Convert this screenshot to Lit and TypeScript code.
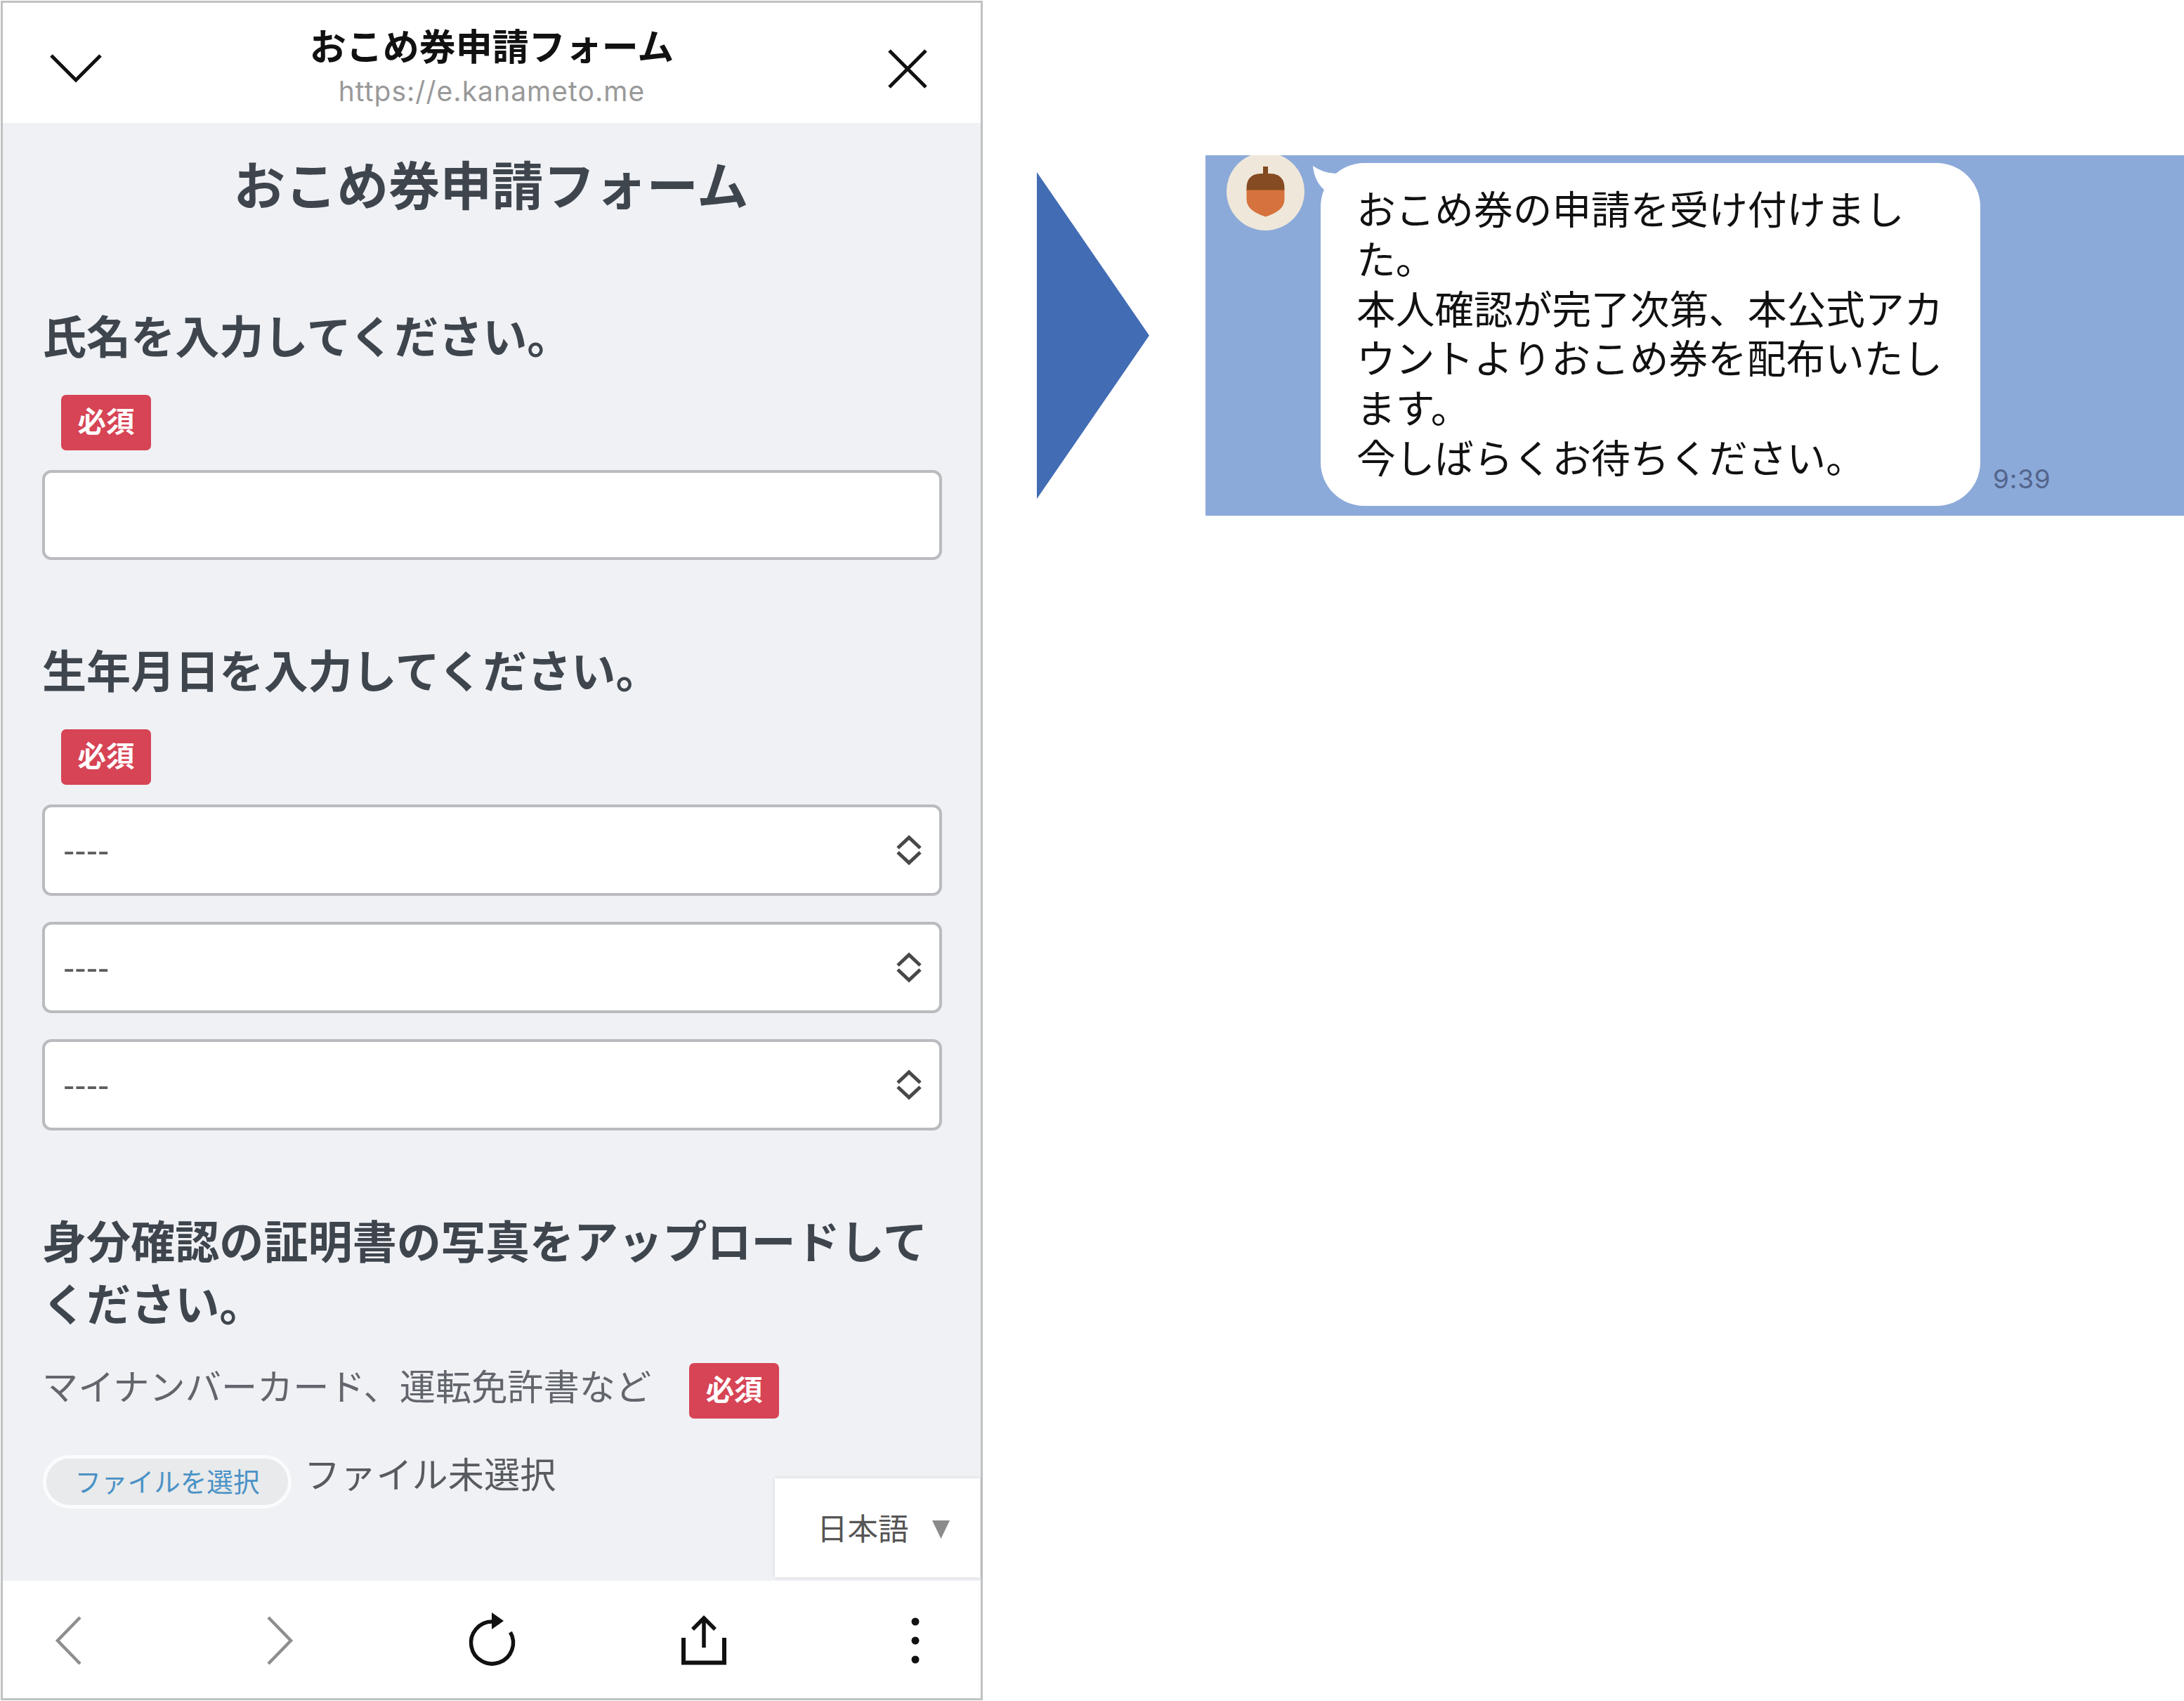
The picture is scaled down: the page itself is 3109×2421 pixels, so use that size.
import {html, svg, css, LitElement} from 'lit';
import {customElement, property} from 'lit/decorators.js';
import {map} from 'lit/directives/map.js';

const MESSAGE_LINES = [
  'おこめ券の申請を受け付けまし',
  'た。',
  '本人確認が完了次第、本公式アカ',
  'ウントよりおこめ券を配布いたし',
  'ます。',
  '今しばらくお待ちください。',
];

const TOOLBAR_ICONS = [
  svg`<path class="muted" d="M56 9 L24 42 L56 75"/>`,
  svg`<path class="muted" d="M23 9 L55 42 L23 75"/>`,
  svg`
    <path d="M39.500 15 A30 30 0 1 0 65.500 30"/>
    <path class="solid" d="M39 2 L56 14 L39 26 Z"/>
  `,
  svg`
    <path class="thick" d="M11 38 V73.500 H69 V38"/>
    <path d="M40 52 V11 M24 26 L40 10 L56 26"/>
  `,
  svg`
    <circle class="solid" cx="40" cy="15" r="5.5"/>
    <circle class="solid" cx="40" cy="42" r="5.5"/>
    <circle class="solid" cx="40" cy="69" r="5.5"/>
  `,
];

@customElement('select-box')
export class SelectBox extends LitElement {
  static styles = css`
  :host {
    display: block;
  }

  .box {
    align-items: center;
    background: #fff;
    border: 4px solid #b9bbbf;
    border-radius: 13px;
    box-sizing: border-box;
    color: #5c5c5c;
    display: flex;
    font: 49px/60px "Liberation Sans", sans-serif;
    height: 130px;
    justify-content: space-between;
    padding: 0 23px 0 26px;
  }

  .arrows {
    fill: none;
    height: 44px;
    stroke: #484848;
    stroke-width: 5;
    width: 40px;
  }
  `;

  @property({type: String})
  value = '----';

  render() {
    return html`
    <div class="box">
      <span>${this.value}</span>
      <svg class="arrows" viewBox="0 0 40 44">
        <path d="M4 19 L20 4 L36 19 M4 25 L20 40 L36 25"/>
      </svg>
    </div>
    `;
  }
}

@customElement('request-form')
export class RequestForm extends LitElement {
  static styles = css`
  :host {
    background: #eff1f5;
    box-sizing: border-box;
    color: #3f454d;
    display: block;
    height: 2075px;
    padding: 40px 55px 0 56px;
    position: relative;
  }

  .title {
    font-size: 73.5px;
    font-weight: 700;
    line-height: 90px;
    margin: 0 3px 126px 0;
    text-align: center;
  }

  .label {
    font-size: 63.1px;
    font-weight: 700;
    line-height: 89px;
    margin: 0;
    white-space: nowrap;
  }

  .badge {
    background: #d64455;
    border-radius: 7px;
    box-sizing: border-box;
    color: #fff;
    font-size: 40.5px;
    font-weight: 700;
    height: 79px;
    line-height: 72px;
    text-align: center;
    width: 128px;
  }

  .field .badge {
    margin: 42px 0 28px 27px;
  }

  .field {
    margin-bottom: 110px;
  }

  .text-input {
    background: #fff;
    border: 4px solid #b9bbbf;
    border-radius: 13px;
    box-sizing: border-box;
    height: 128px;
  }

  .selects {
    display: grid;
    gap: 37px;
  }

  .hint {
    color: #62666c;
    display: flex;
    font-size: 51.2px;
    gap: 54px;
    line-height: 62px;
    margin-top: 43px;
  }

  .file {
    color: #575b60;
    display: flex;
    font-size: 51.2px;
    gap: 18px;
    line-height: 51px;
    margin-top: 52px;
  }

  .file-button {
    background: #e8eaeb;
    border: 5px solid #fafbfc;
    border-radius: 40px;
    box-sizing: border-box;
    color: #4a92c6;
    font-size: 37.6px;
    height: 76px;
    line-height: 61px;
    margin-left: 1px;
    text-align: center;
    width: 354px;
  }

  .language {
    align-items: center;
    background: #fff;
    bottom: 5px;
    box-shadow: 0 0 5px rgba(0, 0, 0, 0.12);
    box-sizing: border-box;
    color: #555;
    display: flex;
    font-size: 43.5px;
    gap: 33px;
    height: 141px;
    padding: 0 0 3px 60px;
    position: absolute;
    right: 1px;
    width: 292px;
  }

  .language svg {
    fill: #8b8b8b;
    height: 26px;
    margin-top: 8px;
    width: 25px;
  }
  `;

  render() {
    return html`
    <h1 class="title">おこめ券申請フォーム</h1>
    <div class="field">
      <h2 class="label">氏名を入力してください。</h2>
      <div class="badge">必須</div>
      <div class="text-input"></div>
    </div>
    <div class="field">
      <h2 class="label">生年月日を入力してください。</h2>
      <div class="badge">必須</div>
      <div class="selects">
        <select-box></select-box>
        <select-box></select-box>
        <select-box></select-box>
      </div>
    </div>
    <h2 class="label">身分確認の証明書の写真をアップロードして<br>ください。</h2>
    <div class="hint">
      <span>マイナンバーカード、運転免許書など</span>
      <div class="badge">必須</div>
    </div>
    <div class="file">
      <div class="file-button">ファイルを選択</div>
      <span>ファイル未選択</span>
    </div>
    <div class="language">
      <span>日本語</span>
      <svg viewBox="0 0 25 26"><path d="M0 0 H25 L12.5 26 Z"/></svg>
    </div>
    `;
  }
}

@customElement('chat-panel')
export class ChatPanel extends LitElement {
  static styles = css`
  :host {
    align-items: flex-start;
    background: #8caad9;
    box-sizing: border-box;
    display: flex;
    height: 513px;
    overflow: hidden;
    padding-left: 30px;
  }

  .avatar {
    flex: none;
    height: 111px;
    margin-top: -4px;
    width: 111px;
  }

  .bubble {
    background: #fff;
    border-radius: 62px;
    box-sizing: border-box;
    color: #111;
    flex: none;
    font-size: 55.7px;
    height: 488px;
    line-height: 70.8px;
    margin: 11px 0 0 23px;
    padding: 28px 0 0 51px;
    position: relative;
    white-space: nowrap;
    width: 939px;
  }

  .tail {
    fill: #fff;
    height: 50px;
    left: -11px;
    position: absolute;
    top: 4px;
    width: 50px;
  }

  .time {
    align-self: flex-end;
    color: #53658c;
    font: 37px/40px Inter, sans-serif;
    letter-spacing: 0.8px;
    margin: 0 0 32px 18px;
  }
  `;

  render() {
    return html`
    <svg class="avatar" viewBox="0 0 111 111">
      <circle cx="55.5" cy="55.5" r="55.5" fill="#efe8da"/>
      <path d="M52 20 H59 V32 H52 Z" fill="#80491f"/>
      <path d="M28.500 54 V51 Q28.500 30 50 30 H61 Q82.500 30 82.500 51 V54 Z" fill="#854b22"/>
      <path d="M28.500 53.500 H82.500 V66 C82.500 80 71 86 55.500 91.500 C40 86 28.500 80 28.500 66 Z" fill="#d6723e"/>
    </svg>
    <div class="bubble">
      <svg class="tail" viewBox="0 0 50 50">
        <path d="M0 0 Q13 10 33 11 L46 12 L24 48 L16 34 Q2 22 0 0 Z"/>
      </svg>
      ${map(MESSAGE_LINES, (line: string) => html`<div>${line}</div>`)}
    </div>
    <span class="time">9:39</span>
    `;
  }
}

@customElement('app-root')
export class AppRoot extends LitElement {
  static styles = css`
  :host {
    align-items: flex-start;
    background: #fff;
    box-sizing: border-box;
    display: flex;
    font-family: "Noto Sans CJK JP", sans-serif;
    height: 2421px;
    overflow: hidden;
    padding: 1px 0 0 1px;
    width: 3109px;
  }

  .phone {
    border: 3px solid #c0c1c2;
    box-sizing: border-box;
    flex: none;
    height: 2419px;
    width: 1398px;
  }

  .header {
    box-sizing: border-box;
    display: grid;
    grid-template-columns: 1fr auto 1fr;
    height: 171px;
    padding-top: 29px;
  }

  .header svg {
    fill: none;
    stroke: #111;
    stroke-width: 5;
  }

  .collapse {
    height: 44px;
    margin: 42px 0 0 66px;
    width: 76px;
  }

  .close {
    height: 60px;
    justify-self: end;
    margin: 35px 74px 0 0;
    width: 60px;
  }

  .heading {
    text-align: center;
  }

  .page-title {
    color: #111;
    font-size: 52px;
    font-weight: 700;
    line-height: 62px;
  }

  .page-url {
    color: #999;
    font: 39px/50px Inter, sans-serif;
    letter-spacing: 1.05px;
    margin-top: 10px;
  }

  .toolbar {
    display: flex;
    justify-content: space-between;
    padding: 43px 53px 0 54px;
  }

  .toolbar svg {
    fill: none;
    height: 84px;
    stroke: #111;
    stroke-width: 5.5;
    width: 80px;
  }

  .toolbar .muted {
    stroke: #8e8e8e;
    stroke-width: 4.5;
  }

  .toolbar .thick {
    stroke-width: 6;
  }

  .toolbar .solid {
    fill: #111;
    stroke: none;
  }

  .step-arrow {
    fill: #426cb4;
    flex: none;
    height: 465px;
    margin: 244px 80px 0 77px;
    width: 160px;
  }

  chat-panel {
    flex: 1;
    margin-top: 220px;
  }
  `;

  render() {
    return html`
    <div class="phone">
      <div class="header">
        <svg class="collapse" viewBox="0 0 76 44"><path d="M3 4 L38 39 L73 4"/></svg>
        <div class="heading">
          <div class="page-title">おこめ券申請フォーム</div>
          <div class="page-url">https://e.kanameto.me</div>
        </div>
        <svg class="close" viewBox="0 0 60 60"><path d="M4 4 L56 56 M56 4 L4 56"/></svg>
      </div>
      <request-form></request-form>
      <div class="toolbar">
        ${map(TOOLBAR_ICONS, (icon) => html`<svg viewBox="0 0 80 84">${icon}</svg>`)}
      </div>
    </div>
    <svg class="step-arrow" viewBox="0 0 160 465"><path d="M0 0 L160 232.500 L0 465 Z"/></svg>
    <chat-panel></chat-panel>
    `;
  }
}
